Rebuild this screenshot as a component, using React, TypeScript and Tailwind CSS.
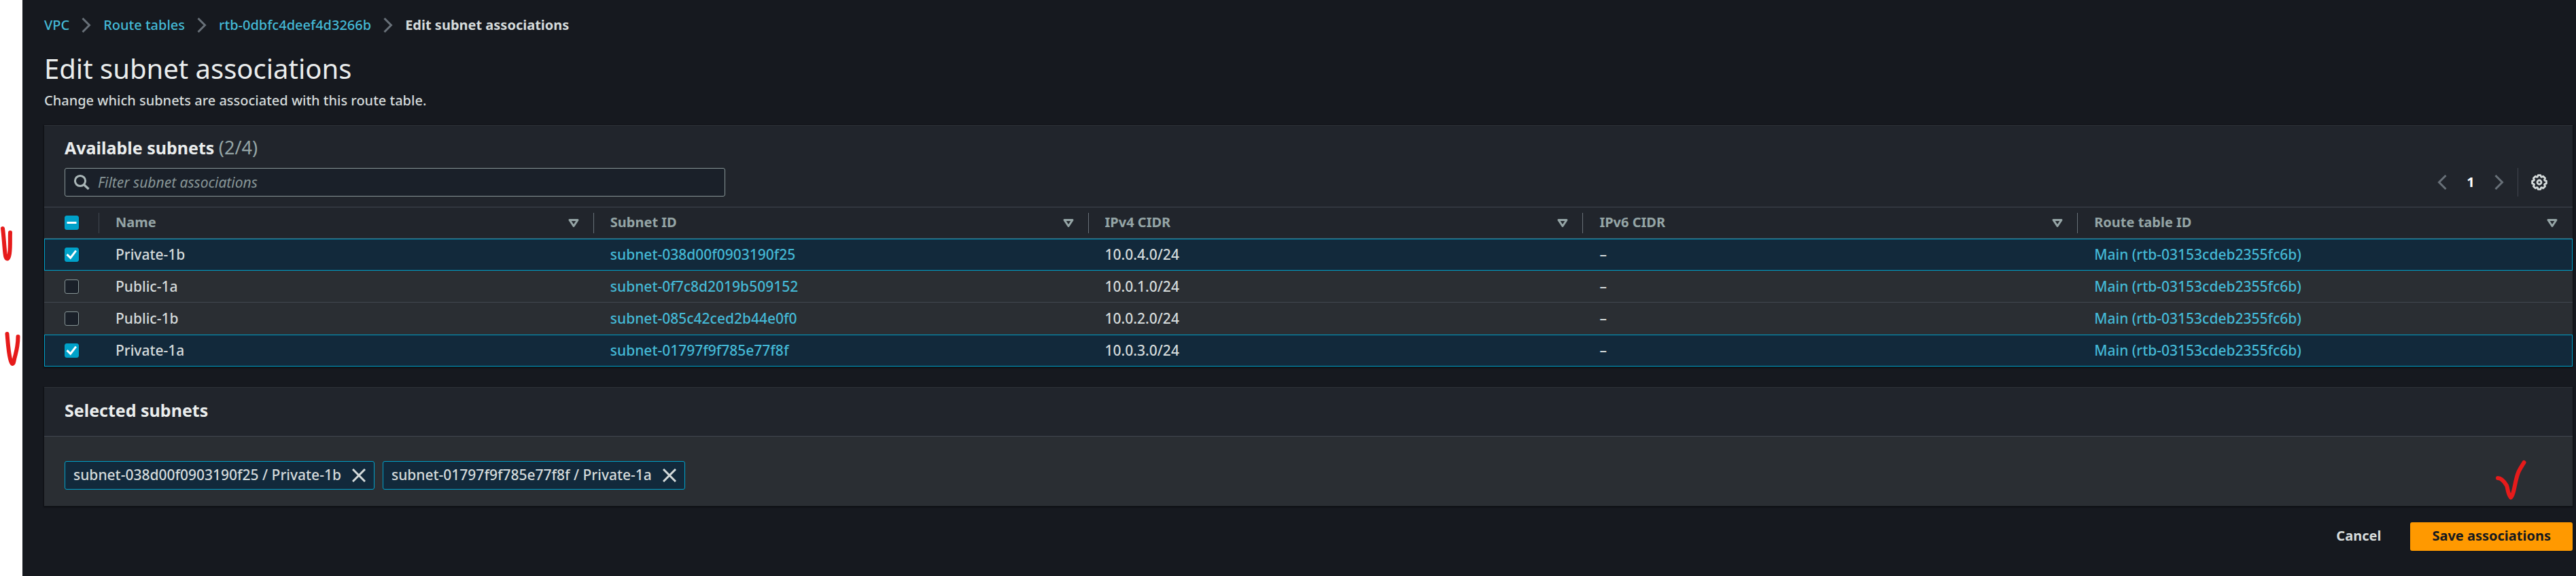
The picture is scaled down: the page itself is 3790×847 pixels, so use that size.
import { useState } from 'react';
import type { ReactNode } from 'react';

type Subnet = { name: string; id: string; cidr: string };

const subnets: Subnet[] = [
  { name: 'Private-1b', id: 'subnet-038d00f0903190f25', cidr: '10.0.4.0/24' },
  { name: 'Public-1a', id: 'subnet-0f7c8d2019b509152', cidr: '10.0.1.0/24' },
  { name: 'Public-1b', id: 'subnet-085c42ced2b44e0f0', cidr: '10.0.2.0/24' },
  { name: 'Private-1a', id: 'subnet-01797f9f785e77f8f', cidr: '10.0.3.0/24' },
];

const columns = ['Name', 'Subnet ID', 'IPv4 CIDR', 'IPv6 CIDR', 'Route table ID'];

function Chevron({ flip = false }: { flip?: boolean }) {
  return (
    <svg viewBox="0 0 14 22" className="h-[22px] w-[14px] shrink-0 text-[#687078]" fill="none" stroke="currentColor" strokeWidth="3" aria-hidden="true">
      <path d={flip ? 'M12.5 1 2.5 11l10 10' : 'M1.5 1l10 10-10 10'} />
    </svg>
  );
}

function SortIcon() {
  return (
    <svg viewBox="0 0 16 14" className="h-[14px] w-4 shrink-0" fill="none" stroke="currentColor" strokeWidth="3" strokeLinejoin="round" aria-hidden="true">
      <path d="M2 2.5h12L8 11.5z" />
    </svg>
  );
}

function SearchIcon() {
  return (
    <svg viewBox="0 0 24 24" className="h-6 w-6 shrink-0 text-[#aab7b8]" fill="none" stroke="currentColor" strokeWidth="3" aria-hidden="true">
      <circle cx="10" cy="10" r="7.6" />
      <path d="M15.4 15.4 22.5 22" strokeWidth="3.4" />
    </svg>
  );
}

function GearIcon() {
  return (
    <svg viewBox="0 0 24 24" className="h-6 w-6" fill="none" stroke="currentColor" strokeWidth="2.8" strokeLinejoin="round" aria-hidden="true">
      <path d="M10.2 1.6h3.6l.7 2.3 1.1.5 2.1-1.2 2.9 2.9-1.1 2.2.5 1.1 2.4.8v3.6l-2.4.8-.5 1.1 1.1 2.2-2.9 2.9-2.1-1.2-1.1.5-.7 2.3h-3.6l-.7-2.3-1.1-.5-2.1 1.2-2.9-2.9 1.1-2.2-.5-1.1-2.4-.8v-3.6l2.4-.8.5-1.1-1.1-2.2 2.9-2.9 2.1 1.2 1.1-.5z" />
      <circle cx="12" cy="12" r="3" />
    </svg>
  );
}

function Checkbox({ label, checked, mixed = false, onChange }: { label: string; checked: boolean; mixed?: boolean; onChange: () => void }) {
  const filled = checked || mixed;
  return (
    <label className="grid h-[21px] w-[21px] cursor-pointer">
      <input
        type="checkbox"
        aria-label={label}
        aria-checked={mixed ? 'mixed' : checked}
        checked={filled}
        onChange={onChange}
        className="col-start-1 row-start-1 h-[21px] w-[21px] appearance-none rounded-[3px] border border-[#879596] bg-[#1a2029] checked:border-[#00a1c9] checked:bg-[#00a1c9]"
      />
      {filled && (
        <svg viewBox="0 0 21 21" className="pointer-events-none z-10 col-start-1 row-start-1 h-[21px] w-[21px]" fill="none" stroke="#fff" strokeWidth="3" aria-hidden="true">
          <path d={mixed ? 'M3.5 10.5h14' : 'M3.5 10.2 8.7 15.2 16.8 4.6'} />
        </svg>
      )}
    </label>
  );
}

function Link({ children }: { children: ReactNode }) {
  return <a href="#" className="text-[#44b9d6]">{children}</a>;
}

const card = 'border-t border-[#2d3237] bg-[#21252c] shadow-[0_1px_2px_1px_rgba(0,0,0,0.4)]';

export default function App() {
  const [selected, setSelected] = useState<string[]>([subnets[0].id, subnets[3].id]);
  const toggle = (id: string) =>
    setSelected((s) => (s.includes(id) ? s.filter((x) => x !== id) : [...s, id]));
  const isOn = (i: number) => i >= 0 && i < subnets.length && selected.includes(subnets[i].id);

  return (
    <div className="flex min-h-screen bg-[#16191f] font-['Noto_Sans',sans-serif] text-[20px] font-medium leading-[30px] text-[#d5dbdb]">
      <div className="relative w-[33px] shrink-0 bg-white">
        <svg viewBox="0 0 33 240" className="absolute left-0 top-[320px] h-[240px] w-[33px]" fill="none" stroke="#e61b1b" strokeWidth="6" strokeLinecap="round" strokeLinejoin="round" aria-hidden="true">
          <path d="M4 16C5.500 26 6 40 7.500 53 8.500 63 12.500 63 14 53 15.500 42 14.500 31 15 22" />
          <path d="M10.500 171C11.500 182 12 192 14 203 16 214 19 219 20.500 211 22.500 200 26.500 193 26.500 175" />
        </svg>
      </div>

      <main className="min-w-0 grow pb-[36px] pl-8 pr-[5px] pt-[22px]">
        <nav aria-label="Breadcrumbs" className="flex items-center gap-[18px]">
          <Link>VPC</Link>
          <Chevron />
          <Link>Route tables</Link>
          <Chevron />
          <Link>rtb-0dbfc4deef4d3266b</Link>
          <Chevron />
          <span className="font-bold">Edit subnet associations</span>
        </nav>

        <h1 className="mt-[22px] text-[40px] font-normal leading-[54px] text-[#eaeded]">Edit subnet associations</h1>
        <p className="mt-[5px]">Change which subnets are associated with this route table.</p>

        <section className={`mt-[21px] ${card}`}>
          <div className="px-[30px] pb-[15px] pt-[15px]">
            <h2 className="text-[25px] font-bold leading-[34px] text-[#eaeded]">
              Available subnets <span className="text-[27px] font-normal text-[#95a5a6]">({selected.length}/{subnets.length})</span>
            </h2>
            <div className="mt-[13px] flex items-center justify-between">
              <label className="flex h-[42px] w-full max-w-[972px] items-center gap-3 rounded-[3px] border border-[#879596] bg-[#1a2029] px-3">
                <SearchIcon />
                <input
                  type="text"
                  aria-label="Filter subnet associations"
                  placeholder="Filter subnet associations"
                  className="min-w-0 grow bg-transparent text-[21px] font-normal outline-none placeholder:italic placeholder:text-[#879596]"
                />
              </label>
              <div className="flex items-center">
                <button type="button" aria-label="Previous page"><Chevron flip /></button>
                <button type="button" className="w-[70px] font-bold text-white">1</button>
                <button type="button" aria-label="Next page"><Chevron /></button>
                <span className="ml-5 h-[42px] border-l border-[#414750]" />
                <button type="button" aria-label="Preferences" className="ml-[19px] mr-[7px]"><GearIcon /></button>
              </div>
            </div>
          </div>

          <table className="w-full table-fixed border-separate border-spacing-0 text-left">
            <thead className="text-[#95a5a6]">
              <tr className="h-[47px]">
                <th className="w-[81px] border-y border-[#414750] p-0">
                  <div className="flex h-[30px] items-center border-r border-[#414750] pl-[30px]">
                    <Checkbox
                      label="Select all subnets"
                      checked={selected.length === subnets.length}
                      mixed={selected.length > 0 && selected.length < subnets.length}
                      onChange={() => setSelected(selected.length === subnets.length ? [] : subnets.map((s) => s.id))}
                    />
                  </div>
                </th>
                {columns.map((c, i) => (
                  <th key={c} className="border-y border-[#414750] p-0 font-bold">
                    <div className={`flex h-[30px] items-center justify-between border-r pl-6 pr-[21px] ${i === columns.length - 1 ? 'border-transparent' : 'border-[#687078]'}`}>
                      <span className="pb-0.5">{c}</span>
                      <button type="button" aria-label={`Sort by ${c}`}><SortIcon /></button>
                    </div>
                  </th>
                ))}
              </tr>
            </thead>
            <tbody className="bg-[#2a2e33] text-[21px]">
              {subnets.map((s, i) => {
                const on = isOn(i);
                const edge = on
                  ? 'border-y border-[#00a1c9] bg-[#12293b]'
                  : isOn(i + 1) || i === subnets.length - 1
                    ? 'border-y border-transparent'
                    : 'border-y border-t-transparent border-b-[#414750]';
                return (
                  <tr key={s.id} className="h-[47px]">
                    <td className={`p-0 ${on ? 'border-l pl-[29px]' : 'pl-[30px]'} ${edge}`}>
                      <Checkbox label={`Select ${s.name}`} checked={on} onChange={() => toggle(s.id)} />
                    </td>
                    <td className={`pb-0.5 pl-6 pt-0 ${edge}`}>{s.name}</td>
                    <td className={`pb-0.5 pl-6 pt-0 ${edge}`}><Link>{s.id}</Link></td>
                    <td className={`pb-0.5 pl-6 pt-0 ${edge}`}>{s.cidr}</td>
                    <td className={`pb-0.5 pl-6 pt-0 ${edge}`}>–</td>
                    <td className={`pb-0.5 pl-6 pt-0 ${on ? 'border-r' : ''} ${edge}`}><Link>Main (rtb-03153cdeb2355fc6b)</Link></td>
                  </tr>
                );
              })}
            </tbody>
          </table>
        </section>

        <section className={`relative mt-[30px] ${card}`}>
          <h2 className="border-b border-[#414750] px-[30px] pb-[21px] pt-[16px] text-[25px] font-bold leading-[34px] text-[#eaeded]">Selected subnets</h2>
          <div className="flex flex-wrap gap-3 bg-[#2a2e33] px-[30px] pb-6 pt-9 text-[21px]">
            {subnets.filter((s) => selected.includes(s.id)).map((s) => (
              <span key={s.id} className="flex h-[42px] items-center gap-4 rounded-[3px] border border-[#00a1c9] bg-[#12293b] px-3">
                <span className="pb-0.5">{s.id} / {s.name}</span>
                <button type="button" aria-label={`Remove ${s.name}`} onClick={() => toggle(s.id)}>
                  <svg viewBox="0 0 20 20" className="h-5 w-5" fill="none" stroke="currentColor" strokeWidth="3" aria-hidden="true">
                    <path d="M1 1l18 18M19 1 1 19" />
                  </svg>
                </button>
              </span>
            ))}
          </div>
          <svg viewBox="0 0 46 60" className="absolute bottom-[8px] right-[68px] h-[60px] w-[46px]" fill="none" stroke="#e61b1b" strokeWidth="6" strokeLinecap="round" strokeLinejoin="round" aria-hidden="true">
            <path d="M4 27C9 27 14 33 17 38 19 43 18 49 23 55.500 28 52 29 31 34 19 36 14 39 10 42.500 4" />
          </svg>
        </section>

        <div className="mt-6 flex justify-end gap-3 font-bold">
          <button type="button" className="h-[42px] px-[31px] pb-0.5">Cancel</button>
          <button type="button" className="h-[42px] rounded-[3px] bg-[#ff9900] px-8 pb-0.5 text-[#16191f]">Save associations</button>
        </div>
      </main>
    </div>
  );
}
